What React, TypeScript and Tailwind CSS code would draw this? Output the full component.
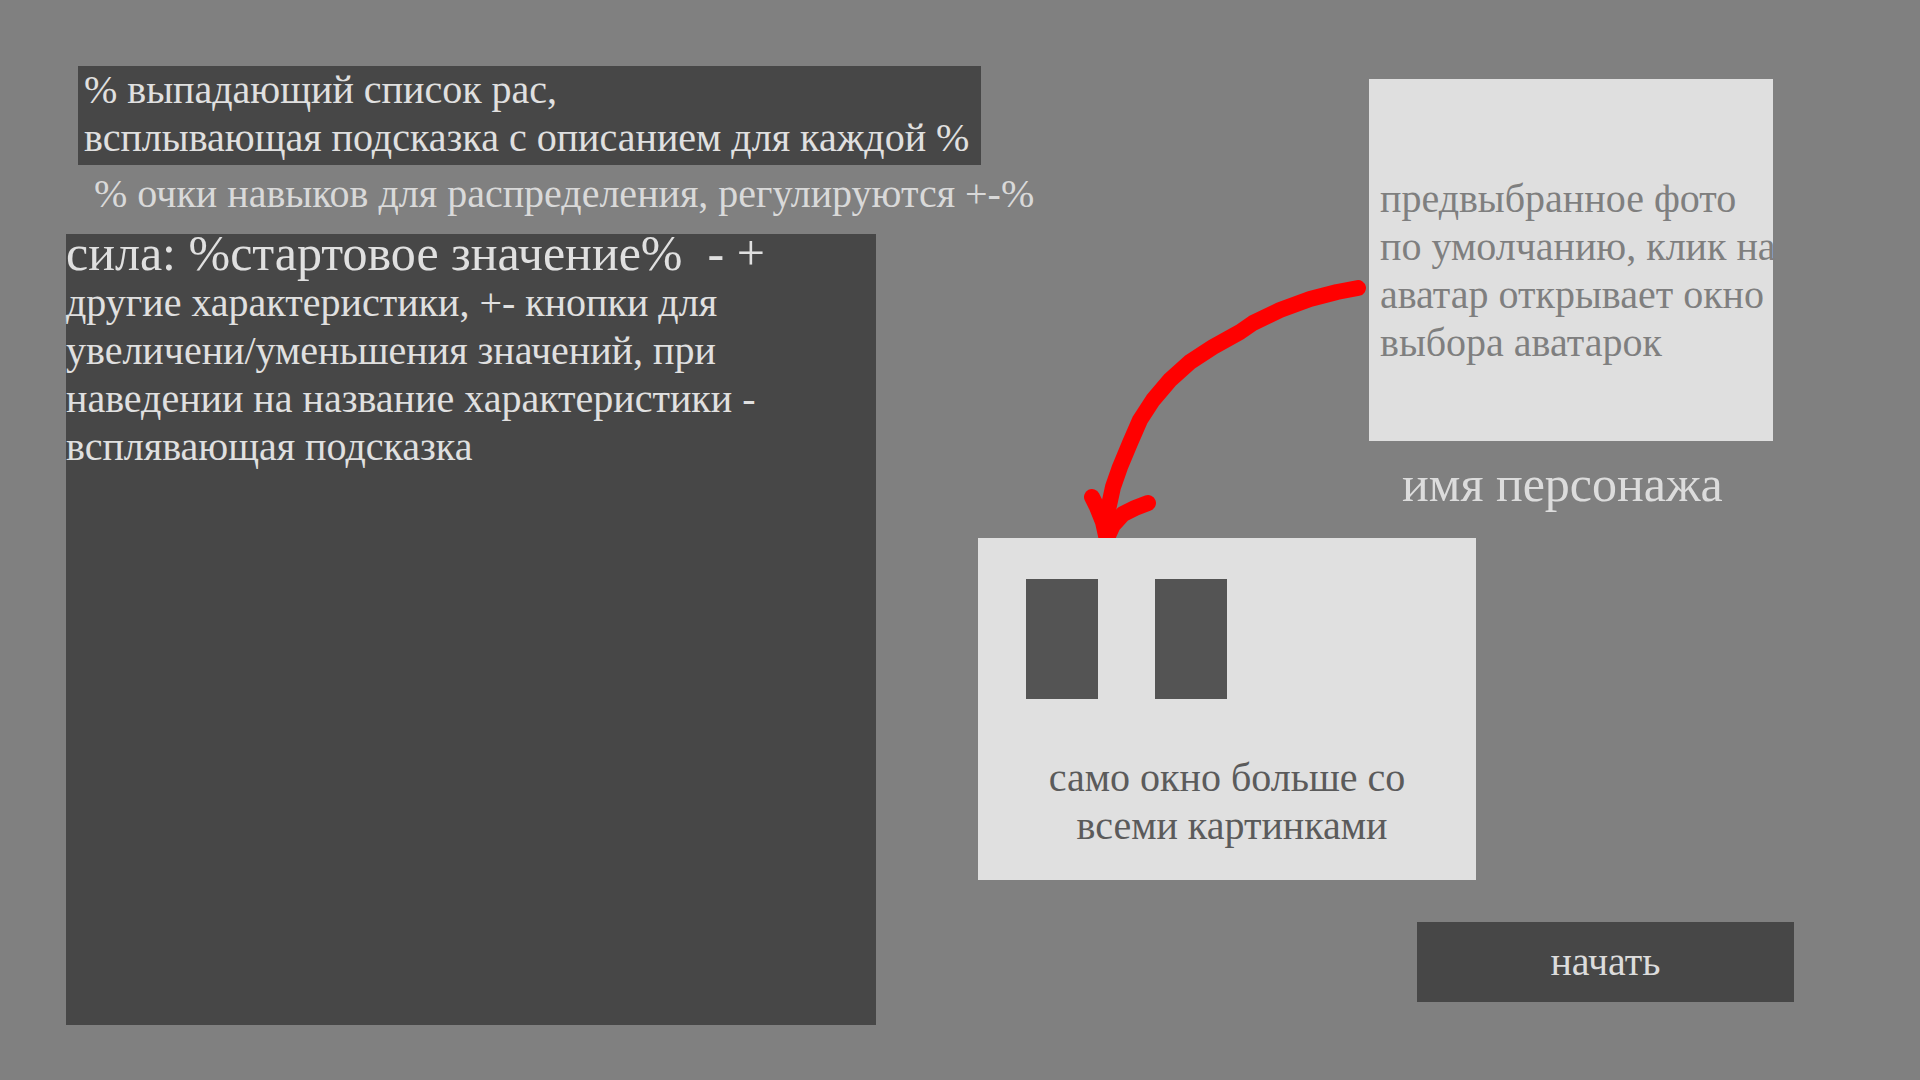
import React from "react";

const serif = "font-['Liberation_Serif','Times_New_Roman',serif]";

function Arrow() {
  const pts: [number, number][] = [
    [1358, 288], [1337, 292], [1310, 299], [1280, 310], [1253, 323], [1240, 332],
    [1213, 347], [1190, 362], [1170, 380], [1153, 400], [1140, 420], [1130, 443],
    [1120, 467], [1113, 487], [1108, 510], [1107, 537],
  ];
  const d = "M" + pts.map((p) => p.join(" ")).join(" L");
  return (
    <svg
      className="absolute left-0 top-0 pointer-events-none"
      width={1920}
      height={1080}
      viewBox="0 0 1920 1080"
    >
      <path d={d} fill="none" stroke="#ff0000" strokeWidth={16} strokeLinecap="round" strokeLinejoin="round" />
      <path d="M1092 497 L1097 507 L1103 522 L1107 540" fill="none" stroke="#ff0000" strokeWidth={16} strokeLinecap="round" strokeLinejoin="round" />
      <path d="M1148 503 L1135 508 L1123 514 L1113 525 L1107 538" fill="none" stroke="#ff0000" strokeWidth={16} strokeLinecap="round" strokeLinejoin="round" />
    </svg>
  );
}

export default function App() {
  return (
    <div className={`relative w-[1920px] h-[1080px] bg-[#808080] overflow-hidden flex ${serif}`}>
      <Arrow />
      {/* Left column */}
      <div className="ml-[66px] w-[912px] flex flex-col shrink-0">
        <div className="relative mt-[66px] ml-[12px] w-[903px] h-[99px] bg-[#474747] pl-[6px] text-[40px] leading-[48px] text-[#e0e0e0] whitespace-nowrap">
          <div>% выпадающий список рас,</div>
          <div>всплывающая подсказка с описанием для каждой %</div>
        </div>
        <div className="relative mt-[5px] pl-[28px] text-[40px] leading-[48px] text-[#d9d9d9] whitespace-nowrap">
          % очки навыков для распределения, регулируются +-%
        </div>
        <div className="relative mt-[16px] w-[810px] h-[791px] bg-[#474747] text-[#e0e0e0] whitespace-nowrap">
          <div className="-mt-[3px] text-[50px] leading-[44px] whitespace-pre">сила: %стартовое значение%  - +</div>
          <div className="mt-[4px] text-[40px] leading-[48px]">
            <div>другие характеристики, +- кнопки для</div>
            <div>увеличени/уменьшения значений, при</div>
            <div>наведении на название характеристики -</div>
            <div>всплявающая подсказка</div>
          </div>
        </div>
      </div>
      {/* Right column */}
      <div className="flex flex-col flex-1">
        <div className="relative mt-[79px] ml-[391px] w-[404px] h-[362px] bg-[#dfdfdf] pt-[96px] pl-[11px] text-[40px] leading-[48px] text-[#7f7f7f] whitespace-nowrap">
          <div>предвыбранное фото</div>
          <div>по умолчанию, клик на</div>
          <div>аватар открывает окно</div>
          <div>выбора аватарок</div>
        </div>
        <div className="relative mt-[15px] ml-[424px] h-[56px] text-[50px] leading-[56px] text-[#dcdcdc] whitespace-nowrap">
          имя персонажа
        </div>
        <div className="relative mt-[26px] w-[498px] h-[342px] bg-[#e0e0e0] flex flex-col">
          <div className="flex gap-[57px] mt-[41px] ml-[48px]">
            <div className="w-[72px] h-[120px] bg-[#545454]" />
            <div className="w-[72px] h-[120px] bg-[#545454]" />
          </div>
          <div className="mt-[55px] text-center text-[40px] leading-[48px] text-[#5b5b5b] whitespace-pre">
            <div>само окно больше со</div>
            <div> всеми картинками</div>
          </div>
        </div>
        <div className="relative mt-[42px] ml-[439px] w-[377px] h-[80px] bg-[#474747] flex items-center justify-center text-[40px] leading-[48px] text-[#dcdcdc]">
          начать
        </div>
      </div>
    </div>
  );
}
